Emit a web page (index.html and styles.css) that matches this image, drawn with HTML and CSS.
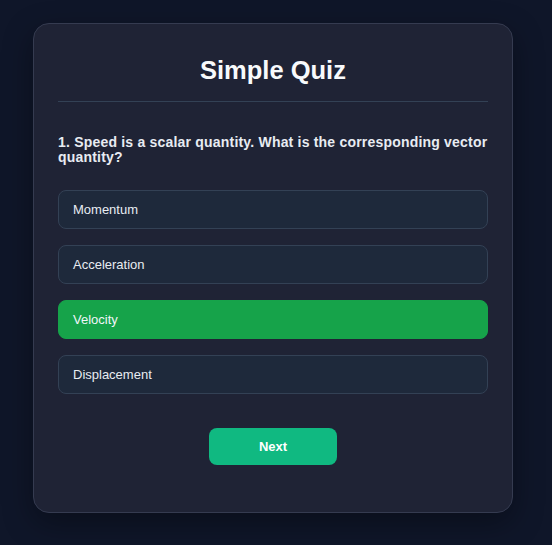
FILE: index.html
```html
<!DOCTYPE html>
<html>
<head>
<meta charset="utf-8">
<link rel="stylesheet" href="styles.css">
</head>
<body>
<div class="card">
  <h1 class="title">Simple Quiz</h1>
  <div class="quiz">
    <h2 class="question">1. Speed is a scalar quantity. What is the corresponding vector quantity?</h2>
    <div class="answers">
      <button class="btn">Momentum</button>
      <button class="btn">Acceleration</button>
      <button class="btn correct">Velocity</button>
      <button class="btn">Displacement</button>
    </div>
    <button class="next">Next</button>
  </div>
</div>
</body>
</html>
```
FILE: styles.css
```css
* { box-sizing: border-box; }
html, body { margin: 0; padding: 0; }
body {
  background: #0f1629;
  font-family: "Liberation Sans", Arial, sans-serif;
  color: #f1f5f9;
  width: 552px;
  height: 545px;
  padding-top: 23px;
  padding-left: 33px;
}
.card {
  width: 480px;
  height: 490px;
  background: #1f2335;
  border: 1px solid #353b50;
  border-radius: 16px;
  padding: 24px;
  box-shadow: 0 10px 30px rgba(0,0,0,0.35);
}
.title {
  margin: 0;
  font-size: 25.5px;
  line-height: 30px;
  text-align: center;
  font-weight: bold;
  color: #f8fafc;
  padding-top: 7px;
  padding-bottom: 16px;
  border-bottom: 1px solid #334155;
}
.question {
  margin: 33px 0 25px;
  font-size: 14px;
  line-height: 15px;
  letter-spacing: 0.2px;
  font-weight: bold;
  color: #e8ecf2;
}
.answers {
  display: flex;
  flex-direction: column;
  gap: 16px;
}
.btn {
  display: block;
  width: 100%;
  text-align: left;
  font-family: "Liberation Sans", Arial, sans-serif;
  font-size: 13px;
  line-height: 15px;
  padding: 11px 14px;
  background: #1e293b;
  color: #e8ecf2;
  border: 1px solid #334155;
  border-radius: 8px;
}
.btn.correct {
  background: #16a34a;
  border-color: #16a34a;
  color: #f1f5f9;
}
.next {
  display: block;
  margin: 34px auto 0;
  width: 128px;
  height: 37px;
  background: #10b981;
  color: #ffffff;
  font-family: "Liberation Sans", Arial, sans-serif;
  font-weight: bold;
  font-size: 13px;
  border: none;
  border-radius: 8px;
}
```
